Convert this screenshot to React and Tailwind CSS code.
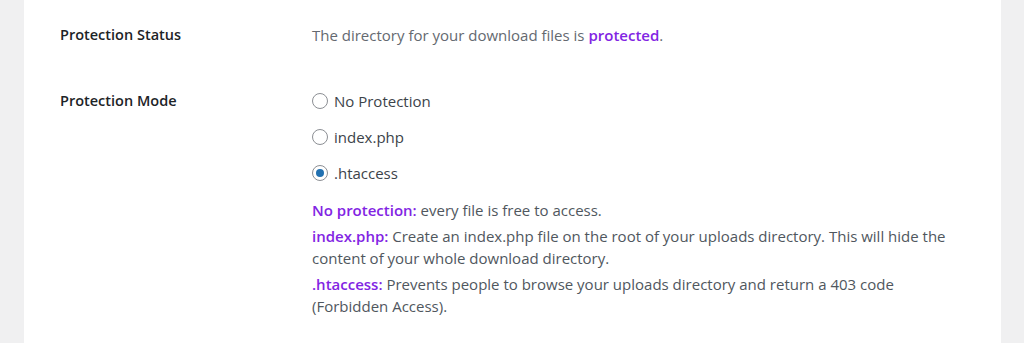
const font = { fontFamily: '"Open Sans", "Noto Sans", sans-serif' };

const Radio = ({ checked, label }) => (
  <label className="flex h-[36px] items-center gap-[6px] text-[15px] text-[#3c434a]">
    <span className="flex h-[16px] w-[16px] shrink-0 items-center justify-center rounded-full border border-[#8c8f94] bg-white">
      {checked && <span className="h-[8px] w-[8px] rounded-full bg-[#2271b1]" />}
    </span>
    {label}
  </label>
);

export default function App() {
  return (
    <div className="h-[343px] bg-[#f0f0f1] pl-[24px] pr-[23px]" style={font}>
      <div className="h-full bg-white pl-[36px]">
        <div className="flex pt-[24px]">
          <div className="w-[252px] text-[14.5px] font-semibold leading-[22px] text-[#1d2327]">Protection Status</div>
          <div className="text-[15px] leading-[22px] text-[#646970]">
            The directory for your download files is{" "}
            <span className="font-semibold text-[#8224e3]">protected</span>.
          </div>
        </div>

        <div className="mt-[37px] flex">
          <div className="w-[252px] pt-[7px] text-[14.5px] font-semibold leading-[22px] text-[#1d2327]">Protection Mode</div>
          <div className="w-[648px]">
            <Radio label="No Protection" />
            <Radio label="index.php" />
            <Radio checked label=".htaccess" />
            <div className="mt-[8px] flex flex-col gap-[4px] text-[15px] leading-[22px] text-[#50575e]">
              <p>
                <span className="font-semibold text-[#8224e3]">No protection:</span> every file is free to access.
              </p>
              <p>
                <span className="font-semibold text-[#8224e3]">index.php:</span> Create an index.php file on the root of your uploads directory. This will hide the content of your whole download directory.
              </p>
              <p>
                <span className="font-semibold text-[#8224e3]">.htaccess:</span> Prevents people to browse your uploads directory and return a 403 code (Forbidden Access).
              </p>
            </div>
          </div>
        </div>
      </div>
    </div>
  );
}
